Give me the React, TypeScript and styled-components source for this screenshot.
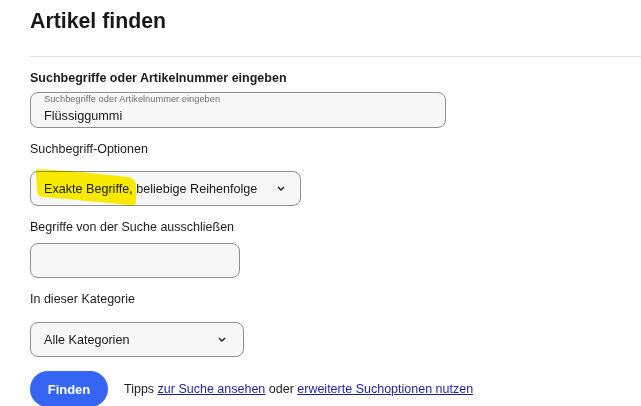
import React from 'react'
import styled, { createGlobalStyle } from 'styled-components'

const GlobalStyle = createGlobalStyle`
  body {
    margin: 0;
    background: #fff;
    font-family: "Liberation Sans", Arial, sans-serif;
    color: #191919;
  }
`

const Page = styled.div`
  padding-left: 30px;
  overflow: hidden;
  height: 406px;
`

const Title = styled.h1`
  margin: 0;
  padding-top: 9px;
  font-size: 21.3px;
  line-height: 24px;
  font-weight: 700;
  color: #191919;
`

const Divider = styled.hr`
  margin: 23px 0 0 0;
  border: 0;
  height: 1px;
  background: #e5e5e5;
`

const Form = styled.form`
  display: flex;
  flex-direction: column;
  gap: 13px;
  padding-top: 13px;
`

const Field = styled.div<{ $gap: number }>`
  display: flex;
  flex-direction: column;
  align-items: flex-start;
  gap: ${(p) => p.$gap}px;
`

const Label = styled.label<{ $bold?: boolean }>`
  font-size: 12.5px;
  line-height: 16px;
  font-weight: ${(p) => (p.$bold ? 700 : 400)};
  color: #1c1c1c;
`

const Box = styled.div<{ $width: number; $height?: number }>`
  position: relative;
  box-sizing: border-box;
  width: ${(p) => p.$width}px;
  height: ${(p) => p.$height ?? 35}px;
  background: #f7f7f7;
  border: 1px solid #8f8f8f;
  border-radius: 8px;
`

const FloatingBox = styled(Box)`
  display: flex;
  flex-direction: column;
  padding: 1px 13px 0;
`

const FloatLabel = styled.span`
  font-size: 9.3px;
  line-height: 11px;
  color: #707070;
`

const FloatValue = styled.span`
  margin-top: 3px;
  font-size: 12.7px;
  line-height: 16px;
  color: #191919;
`

const SelectBox = styled(Box)<{ $padRight: number }>`
  display: flex;
  align-items: center;
  justify-content: space-between;
  padding: 0 ${(p) => p.$padRight}px 0 13px;
`

const SelectText = styled.span`
  position: relative;
  font-size: 12.6px;
  line-height: 16px;
  color: #191919;
`

const Marker = styled.svg`
  position: absolute;
  left: 0;
  top: 0;
  overflow: visible;
  mix-blend-mode: multiply;
  pointer-events: none;
`

const Actions = styled.div`
  display: flex;
  align-items: center;
  gap: 16px;
  margin-top: 1px;
`

const Button = styled.button`
  width: 78px;
  height: 36px;
  border: 0;
  border-radius: 18px;
  background: #3665f3;
  color: #fff;
  font-family: "Liberation Sans", Arial, sans-serif;
  font-size: 13px;
  font-weight: 700;
  cursor: pointer;
`

const Tips = styled.span`
  font-size: 12.5px;
  color: #1c1c1c;

  a {
    color: #1f1f9c;
    text-decoration: underline;
  }
`

function Chevron() {
  return (
    <svg width="8" height="5" viewBox="0 0 8 5">
      <polyline points="1,1 4,4 7,1" fill="none" stroke="#191919" strokeWidth="1.4" />
    </svg>
  )
}

export default function App() {
  return (
    <>
      <GlobalStyle />
      <Page>
        <Title>Artikel finden</Title>
        <Divider />
        <Form onSubmit={(e) => e.preventDefault()}>
          <Field $gap={6}>
            <Label $bold>Suchbegriffe oder Artikelnummer eingeben</Label>
            <FloatingBox $width={416} $height={36}>
              <FloatLabel>Suchbegriffe oder Artikelnummer eingeben</FloatLabel>
              <FloatValue>Flüssiggummi</FloatValue>
            </FloatingBox>
          </Field>

          <Field $gap={14}>
            <Label>Suchbegriff-Optionen</Label>
            <SelectBox $width={271} $padRight={15}>
              <SelectText>Exakte Begriffe, beliebige Reihenfolge</SelectText>
              <Chevron />
              <Marker width="110" height="36" viewBox="0 0 110 36">
                <path
                  d="M6,-3 C30,-2 70,2 97,5 C103,6 105,9 105,15 L105,30 C105,33 102,34 97,33 C70,30 35,27 11,25 C7,24 6,22 6,18 L5,1 C5,-1 5,-3 6,-3 Z"
                  fill="#fff200"
                />
              </Marker>
            </SelectBox>
          </Field>

          <Field $gap={8}>
            <Label>Begriffe von der Suche ausschließen</Label>
            <Box $width={210} />
          </Field>

          <Field $gap={15}>
            <Label>In dieser Kategorie</Label>
            <SelectBox $width={214} $padRight={17}>
              <SelectText>Alle Kategorien</SelectText>
              <Chevron />
            </SelectBox>
          </Field>

          <Actions>
            <Button type="submit">Finden</Button>
            <Tips>
              Tipps <a href="#">zur Suche ansehen</a> oder{' '}
              <a href="#">erweiterte Suchoptionen nutzen</a>
            </Tips>
          </Actions>
        </Form>
      </Page>
    </>
  )
}
